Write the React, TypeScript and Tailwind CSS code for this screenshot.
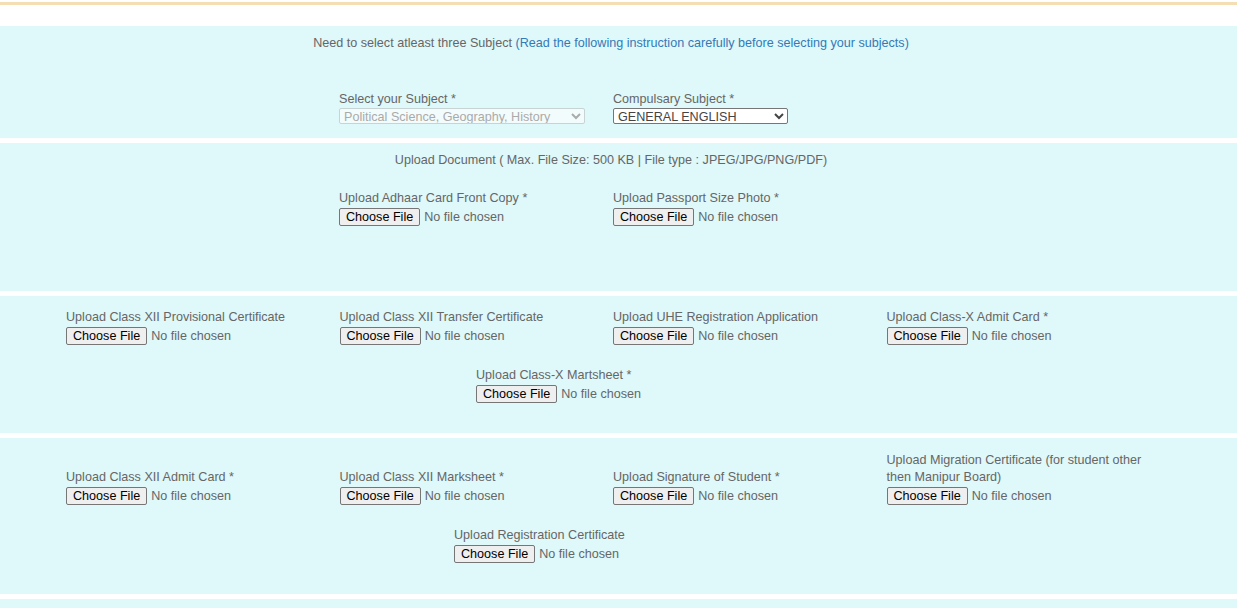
import React from "react";

const font = { fontFamily: '"Liberation Sans", Arial, sans-serif' };

function FileField({ label }: { label: string }) {
  return (
    <div className="flex flex-col pr-[15px]">
      <span className="text-[12.6px] leading-[17px] text-[#666]">{label}</span>
      <input
        type="file"
        className="mt-[1px] h-[19px] text-[12.6px] leading-[17px] text-[#666] file:mr-[4px] file:h-[18px] file:px-[6px] file:py-0 file:text-[12.6px] file:text-black file:bg-[#efefef] file:border file:border-solid file:border-[#767676] file:rounded-[2px]"
        style={font}
      />
    </div>
  );
}

export default function App() {
  return (
    <div className="w-[1237px] min-h-[608px] bg-white overflow-hidden" style={font}>
      <div className="h-[2px] bg-white" />
      <div className="h-[3px] bg-[#f5deb3]" />
      <div className="h-[21px] bg-white" />

      {/* Panel 1 */}
      <div className="h-[112px] bg-[#dff8fa] pt-[9px]">
        <div className="w-[1222px] text-center text-[12.6px] leading-[17px] text-[#666]">
          Need to select atleast three Subject{" "}
          <span className="text-[#337ab7]">(Read the following instruction carefully before selecting your subjects)</span>
        </div>
        <div className="mt-[39px] pl-[339px] grid grid-cols-[274px_274px]">
          <div className="flex flex-col">
            <span className="text-[12.6px] leading-[17px] text-[#666]">Select your Subject *</span>
            <select
              disabled
              className="mt-0 w-[246px] h-[16px] text-[12.6px] leading-[14px] text-[#aaa] bg-[#f3fcfc] border border-[#c8d4d4] rounded-[2px] px-0 py-0 opacity-100"
              style={font}
            >
              <option>Political Science, Geography, History</option>
            </select>
          </div>
          <div className="flex flex-col">
            <span className="text-[12.6px] leading-[17px] text-[#666]">Compulsary Subject *</span>
            <select
              className="mt-0 w-[175px] h-[16px] text-[12.6px] leading-[14px] text-[#444] bg-white border border-[#767676] rounded-[2px] px-0 py-0"
              style={font}
            >
              <option>GENERAL ENGLISH</option>
            </select>
          </div>
        </div>
      </div>
      <div className="h-[5px] bg-white" />

      {/* Panel 2 */}
      <div className="h-[148px] bg-[#dff8fa] pt-[9px]">
        <div className="w-[1222px] text-center text-[12.6px] leading-[17px] text-[#666]">
          Upload Document ( Max. File Size: 500 KB | File type : JPEG/JPG/PNG/PDF)
        </div>
        <div className="mt-[21px] pl-[339px] grid grid-cols-[274px_274px]">
          <FileField label="Upload Adhaar Card Front Copy *" />
          <FileField label="Upload Passport Size Photo *" />
        </div>
      </div>
      <div className="h-[5px] bg-white" />

      {/* Panel 3 */}
      <div className="h-[137px] bg-[#dff8fa] pt-[13px]">
        <div className="pl-[66px] grid grid-cols-[273.5px_273.5px_273.5px_273.5px] items-end">
          <FileField label="Upload Class XII Provisional Certificate" />
          <FileField label="Upload Class XII Transfer Certificate" />
          <FileField label="Upload UHE Registration Application" />
          <FileField label="Upload Class-X Admit Card *" />
        </div>
        <div className="mt-[21px] pl-[476px]">
          <FileField label="Upload Class-X Martsheet *" />
        </div>
      </div>
      <div className="h-[5px] bg-white" />

      {/* Panel 4 */}
      <div className="h-[156px] bg-[#dff8fa] pt-[14px]">
        <div className="pl-[66px] grid grid-cols-[273.5px_273.5px_273.5px_273.5px] items-end">
          <FileField label="Upload Class XII Admit Card *" />
          <FileField label="Upload Class XII Marksheet *" />
          <FileField label="Upload Signature of Student *" />
          <FileField label="Upload Migration Certificate (for student other then Manipur Board)" />
        </div>
        <div className="mt-[21px] pl-[454px]">
          <FileField label="Upload Registration Certificate" />
        </div>
      </div>
      <div className="h-[5px] bg-white" />

      {/* Panel 5 */}
      <div className="h-[9px] bg-[#dff8fa]" />
    </div>
  );
}
